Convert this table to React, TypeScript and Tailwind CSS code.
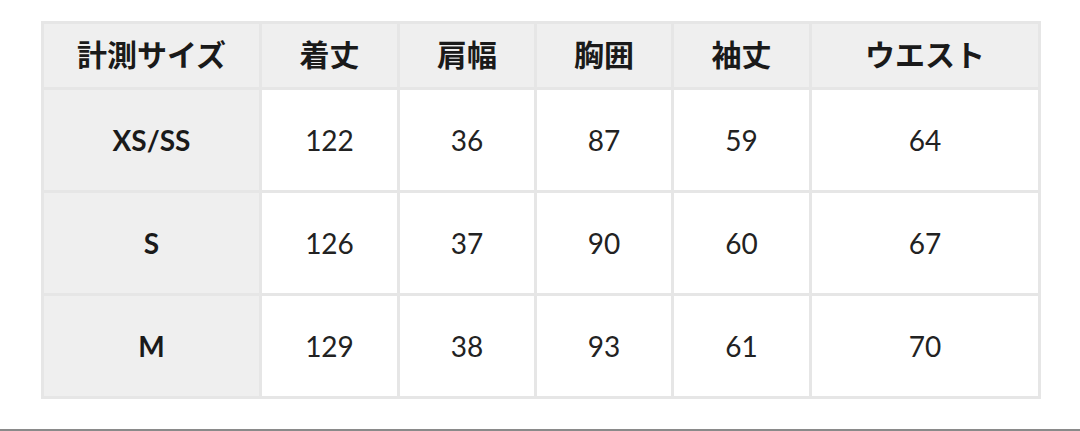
import React from "react";

const headers = ["計測サイズ", "着丈", "肩幅", "胸囲", "袖丈", "ウエスト"];
const rows = [
  ["XS/SS", "122", "36", "87", "59", "64"],
  ["S", "126", "37", "90", "60", "67"],
  ["M", "129", "38", "93", "61", "70"],
];
const widths = ["w-[218px]", "w-[138px]", "w-[137px]", "w-[137px]", "w-[138px]", "w-[229px]"];

export default function App() {
  return (
    <div
      className="w-[1080px] h-[431px] bg-white relative"
      style={{ fontFamily: 'Lato, "Noto Sans CJK JP", sans-serif' }}
    >
      <div className="pt-[21px] pl-[41px]">
        <table className="border-collapse table-fixed w-[998px]">
          <thead>
            <tr className="h-[66px]">
              {headers.map((h, i) => (
                <th
                  key={h}
                  className={`${widths[i]} border-[3px] border-[#e6e6e6] bg-[#efefef] text-[30px] leading-none font-bold text-[#1a1a1a] text-center align-middle p-0 pb-[4px]`}
                >
                  {h}
                </th>
              ))}
            </tr>
          </thead>
          <tbody>
            {rows.map((r) => (
              <tr key={r[0]} className="h-[103px]">
                {r.map((c, i) => (
                  <td
                    key={i}
                    className={`border-[3px] border-[#e6e6e6] text-[28px] leading-none text-center align-middle p-0 ${
                      i === 0 ? "bg-[#efefef] font-bold text-[#1a1a1a]" : "bg-white text-[#222]"
                    }`}
                  >
                    {c}
                  </td>
                ))}
              </tr>
            ))}
          </tbody>
        </table>
      </div>
      <div className="absolute left-0 right-0 bottom-0 h-[2px] bg-[#8a8a8a]" />
    </div>
  );
}
